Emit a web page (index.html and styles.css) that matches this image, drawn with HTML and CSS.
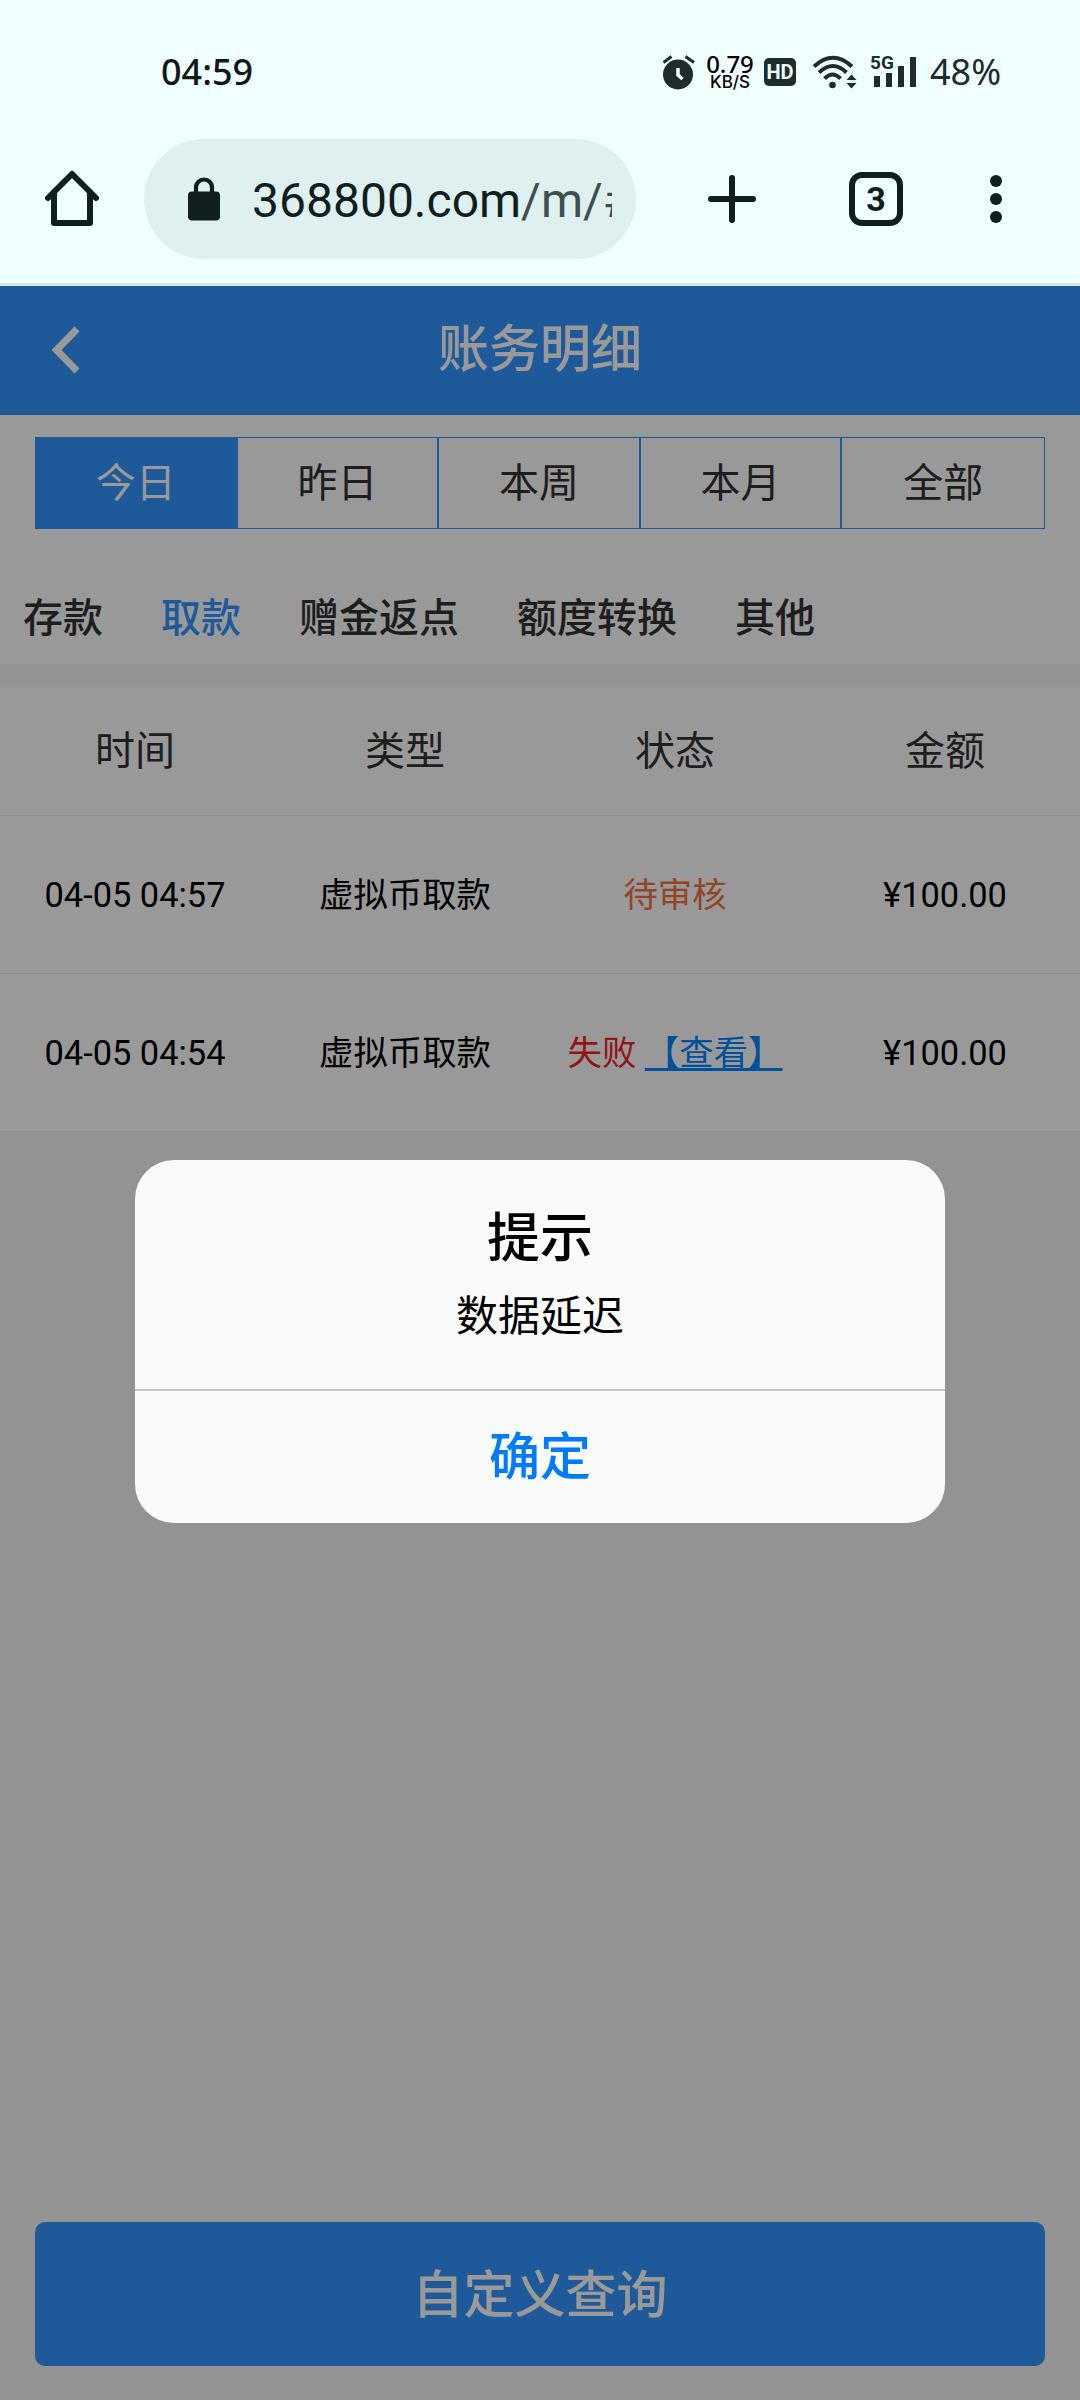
FILE: index.html
```html
<!DOCTYPE html>
<html lang="zh-CN">
<head>
<meta charset="utf-8">
<title>账务明细</title>
<link rel="stylesheet" href="styles.css">
</head>
<body>
<div class="statusbar">
  <span class="clock">04:59</span>
  <div class="indicators">
    <svg class="alarm" width="34" height="36" viewBox="0 0 34 36">
      <circle cx="16" cy="20.500" r="15" fill="#202b2b"/>
      <path d="M1.500 8.500L9.500 2.500M23.500 2.500L32 8.500" stroke="#202b2b" stroke-width="3"/>
      <path d="M16 14V21L20.500 25" stroke="#f0ffff" stroke-width="3.500" fill="none"/>
    </svg>
    <div class="speed"><span class="rate">0.79</span><span class="unit">KB/S</span></div>
    <span class="hd">HD</span>
    <svg class="wifi" width="46" height="36" viewBox="0 0 46 36">
      <g fill="none" stroke="#202b2b" stroke-width="4">
        <path d="M2 12.500Q21 -5 40 12.500"/>
        <path d="M7 18.500Q21 5.500 34.500 18.500"/>
        <path d="M12.500 24.500Q20.500 16.500 28.500 24.500"/>
      </g>
      <circle cx="20.500" cy="31" r="3.300" fill="#202b2b"/>
      <path d="M34.500 26L39.500 20.500L44.500 26ZM34.500 29L39.500 34.500L44.500 29Z" fill="#202b2b"/>
    </svg>
    <div class="signal">
      <span class="net">5G</span>
      <svg width="48" height="32" viewBox="0 0 48 32"><path d="M4 20h6v11H4zM16 17h6v14h-6zM28 10h6v21h-6zM40 1h6v30h-6z" fill="#202b2b"/></svg>
    </div>
    <span class="battery">48%</span>
  </div>
</div>
<div class="toolbar">
  <svg class="home" width="56" height="60" viewBox="0 0 56 60" fill="none" stroke="#101e1d" stroke-width="6" stroke-linejoin="round" stroke-linecap="round">
    <path d="M4 29L28 5L52 29"/><path d="M10 24V54H46V24"/>
  </svg>
  <div class="omnibox">
    <svg width="32" height="44" viewBox="0 0 32 44"><rect y="14.500" width="32" height="29" rx="4" fill="#101e1d"/><path d="M8 16V10.500a8 8 0 0 1 16 0V16" fill="none" stroke="#101e1d" stroke-width="4.200"/></svg>
    <div class="url">368800.com<span class="path">/m/#/</span></div>
  </div>
  <svg class="plus" width="48" height="48" viewBox="0 0 48 48" stroke="#101e1d" stroke-width="6" stroke-linecap="round"><path d="M3 24H45M24 3V45"/></svg>
  <div class="tabcount">3</div>
  <svg class="more" width="12" height="48" viewBox="0 0 12 48" fill="#101e1d"><circle cx="6" cy="6" r="6"/><circle cx="6" cy="24" r="6"/><circle cx="6" cy="42" r="6"/></svg>
</div>
<main class="page">
  <header class="header">
    <svg class="back" width="28" height="48" viewBox="0 0 28 48"><path d="M25 3L4.500 24L25 45" fill="none" stroke="#fff" stroke-width="7"/></svg>
    <h1 class="title">账务明细</h1>
  </header>
  <section class="filters">
    <div class="periods"><span class="period active">今日</span><span class="period">昨日</span><span class="period">本周</span><span class="period">本月</span><span class="period">全部</span></div>
    <nav class="kinds"><span>存款</span><span class="current">取款</span><span>赠金返点</span><span>额度转换</span><span>其他</span></nav>
  </section>
  <section class="records">
    <div class="row head"><span>时间</span><span>类型</span><span>状态</span><span>金额</span></div>
    <div class="row"><span>04-05 04:57</span><span>虚拟币取款</span><span class="pending">待审核</span><span>¥100.00</span></div>
    <div class="row"><span>04-05 04:54</span><span>虚拟币取款</span><span class="failed">失败 <a class="view">【查看】</a></span><span>¥100.00</span></div>
  </section>
  <div class="query">自定义查询</div>
  <div class="overlay">
    <div class="dialog">
      <div class="message"><h2>提示</h2><p>数据延迟</p></div>
      <div class="confirm">确定</div>
    </div>
  </div>
</main>
</body>
</html>
```

FILE: styles.css
```css
* { box-sizing: border-box; }
body {
  margin: 0;
  width: 1080px;
  height: 2400px;
  overflow: hidden;
  display: flex;
  flex-direction: column;
  background: #f0ffff;
  font-family: Roboto, "Noto Sans CJK SC", sans-serif;
}
svg { display: block; flex: none; }
h1, h2, p { margin: 0; font-weight: 500; }

.statusbar {
  height: 139px;
  padding: 37px 80px 0 161px;
  display: flex;
  justify-content: space-between;
  align-items: flex-start;
  color: #101818;
}
.clock { font: 500 36px/70px "Noto Sans", sans-serif; }
.indicators { display: flex; align-items: center; height: 70px; color: #202b2b; }
.alarm { margin-right: 10px; }
.speed { width: 48px; display: flex; flex-direction: column; align-items: center; color: #000; }
.rate { font: 500 24px/20px "Noto Sans", sans-serif; }
.unit { font: 500 17px/17px Inter, sans-serif; }
.hd {
  margin-left: 10px;
  width: 32px;
  height: 28px;
  border-radius: 5px;
  background: #202b2b;
  color: #f0ffff;
  text-align: center;
  font: 700 20px/28px Roboto, sans-serif;
}
.wifi { margin-left: 16px; }
.signal { position: relative; margin-left: 12px; }
.net { position: absolute; left: 0; top: -2px; font: 700 19px/18px Roboto, sans-serif; background: #f0ffff; height: 17px; }
.battery { margin-left: 12px; font: 400 36px/70px "Noto Sans", sans-serif; width: 70px; white-space: nowrap; }

.toolbar {
  height: 147px;
  padding: 0 78px 24px 44px;
  display: flex;
  align-items: center;
  border-bottom: 3px solid #d0e6ea;
}
.omnibox {
  margin-left: 44px;
  width: 492px;
  height: 120px;
  border-radius: 60px;
  background: #def0ef;
  display: flex;
  align-items: center;
  padding: 0 24px 0 44px;
}
.url {
  margin-left: 32px;
  flex: 1;
  overflow: hidden;
  white-space: nowrap;
  font-size: 48px;
  line-height: 70px;
  padding-top: 3px;
  color: #101e1d;
}
.path { color: #3d4f4e; }
.plus { margin-left: 72px; }
.tabcount {
  margin-left: 93px;
  width: 54px;
  height: 54px;
  border: 6px solid #101e1d;
  border-radius: 13px;
  text-align: center;
  font-weight: 700;
  font-size: 34px;
  line-height: 43px;
  color: #101e1d;
}
.more { margin-left: auto; }

.page { position: relative; flex: 1; display: flex; flex-direction: column; background: #f3f6f4; }
.header { height: 129px; display: grid; grid-template-columns: 135px 1fr 135px; align-items: center; background: #3296ff; color: #fff; }
.back { margin-left: 52px; margin-top: -2px; }
.title { text-align: center; font-size: 51px; line-height: 74px; margin-top: -1px; }
.filters { height: 249px; padding-top: 22px; background: #fff; }
.periods { margin: 0 35px; height: 92px; display: grid; grid-template-columns: repeat(5, 1fr); border: 1px solid #3296ff; }
.period { text-align: center; font-size: 40px; line-height: 91px; color: #333; border-right: 2px solid #3296ff; }
.period:last-child { border-right: 0; }
.period.active { background: #3296ff; color: #fff; }
.kinds { padding: 61px 23px 0; display: flex; gap: 58px; font-size: 40px; line-height: 58px; font-weight: 500; color: #333; }
.current { color: #3296ff; }
.records { margin-top: 23px; }
.row {
  height: 158px;
  display: grid;
  grid-template-columns: repeat(4, 1fr);
  text-align: center;
  font-size: 34.4px;
  line-height: 158px;
  background: #fff;
  border-bottom: 1px solid #eef2f1;
  color: #000;
}
.row span { white-space: nowrap; }
.row.head { height: 129px; font-size: 40px; line-height: 130px; color: #333; }
.pending { color: #f27340; }
.failed { color: #f52323; }
.view { color: #0087ff; text-decoration: underline; text-decoration-thickness: 3px; text-underline-offset: 3px; }
.query {
  margin: auto 35px 34px;
  height: 144px;
  border-radius: 10px;
  background: #3296ff;
  color: #fff;
  text-align: center;
  font-size: 51px;
  line-height: 148px;
  font-weight: 500;
}
.overlay { position: absolute; inset: 0; background: rgba(0, 0, 0, 0.4); display: flex; justify-content: center; align-items: flex-start; padding-top: 874px; }
.dialog { width: 810px; height: 363px; border-radius: 39px; background: #f9fbfa; text-align: center; overflow: hidden; }
.message { height: 231px; border-bottom: 2px solid #c6c8c8; padding-top: 41px; color: #000; }
.message h2 { font-size: 53px; line-height: 76px; }
.message p { font-size: 42px; font-weight: 400; line-height: 80px; }
.confirm { font-size: 51px; font-weight: 500; line-height: 134px; color: #007aff; }
```
